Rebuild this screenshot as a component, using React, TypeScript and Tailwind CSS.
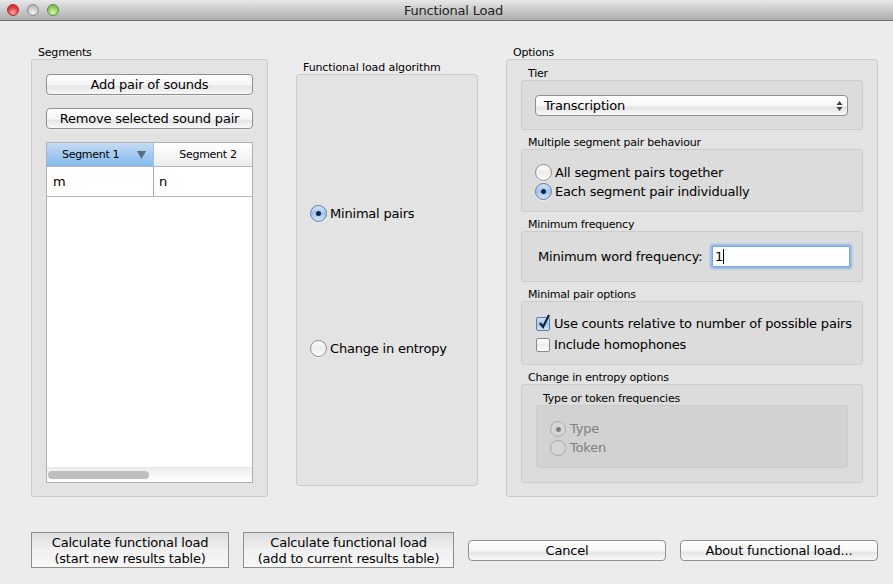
const FONT = "font-['DejaVu_Sans',sans-serif] tracking-[-0.2px]";

function Radio({ on, disabled }: { on?: boolean; disabled?: boolean }) {
  if (disabled) {
    return (
      <span className="flex h-[16px] w-[16px] shrink-0 items-center justify-center rounded-full border border-[#ababab] bg-[#d6d6d6]">
        {on && <span className="h-[5px] w-[5px] rounded-full bg-[#7d7d7d]" />}
      </span>
    );
  }
  return (
    <span
      className={
        on
          ? "flex h-[17px] w-[17px] shrink-0 items-center justify-center rounded-full border border-[#6a7a9a] bg-[linear-gradient(#d4e4f8,#9fc3ef_50%,#cfe4fc)] shadow-[0_1px_0_#f2f2f2]"
          : "flex h-[17px] w-[17px] shrink-0 items-center justify-center rounded-full border border-[#8a8a8a] bg-[linear-gradient(#ffffff,#ececec_50%,#ffffff)] shadow-[0_1px_0_#f2f2f2]"
      }
    >
      {on && <span className="h-[5px] w-[5px] rounded-full bg-[#14233c]" />}
    </span>
  );
}

function MacButton({ children, className }: { children: React.ReactNode; className: string }) {
  return (
    <div
      className={
        "flex h-[21px] items-center justify-center rounded-[4px] border border-[#8f8f8f] bg-[linear-gradient(#ffffff,#f6f6f6_50%,#e6e6e6_60%,#f8f8f8)] text-[13px] leading-none text-black shadow-[0_1px_0_#f0f0f0] " +
        className
      }
    >
      {children}
    </div>
  );
}

function SquareButton({ a, b, className }: { a: string; b: string; className: string }) {
  return (
    <div
      className={
        "flex h-[36px] flex-col items-center justify-center border border-[#8c8c8c] bg-[linear-gradient(#dedede,#f0f0f0_50%,#f8f8f8)] pt-[1px] text-[13px] leading-[16px] text-black " +
        className
      }
    >
      <span>{a}</span>
      <span>{b}</span>
    </div>
  );
}

function Group({
  label,
  boxClass,
  labelClass,
  children,
}: {
  label: string;
  boxClass: string;
  labelClass?: string;
  children?: React.ReactNode;
}) {
  return (
    <div>
      <div className={"h-[13px] text-[11px] leading-[13px] text-black " + (labelClass ?? "pl-[7px]")}>{label}</div>
      <div className={"rounded-[3px] border border-[#cbcbcb] " + boxClass}>{children}</div>
    </div>
  );
}

export default function App() {
  return (
    <div className={"flex h-[584px] w-[893px] flex-col overflow-hidden bg-[#ececec] " + FONT}>
      <div className="relative flex h-[21px] shrink-0 items-center justify-center border-b border-[#6f6f6f] bg-[linear-gradient(#e8e8e8,#adadad)] pl-[14px] text-[13px] leading-none text-[#222]">
        <div className="absolute left-[7px] top-[4px] flex gap-[8px]">
          <span className="h-[12px] w-[12px] rounded-full border border-[#a8343a] bg-[radial-gradient(circle_at_50%_75%,#ffb0a8,#e2353a_60%,#b92c30)]" />
          <span className="h-[12px] w-[12px] rounded-full border border-[#8f8f8f] bg-[radial-gradient(circle_at_50%_75%,#f4f4f4,#c4c4c4_60%,#a2a2a2)]" />
          <span className="h-[12px] w-[12px] rounded-full border border-[#5c9040] bg-[radial-gradient(circle_at_50%_75%,#d8f5b0,#8ccb5c_60%,#5f9f3c)]" />
        </div>
        <span>Functional Load</span>
      </div>

      <div className="flex gap-[28px] pl-[31px] pt-[25px]">
        <Group
          label="Segments"
          boxClass="h-[438px] w-[237px] bg-[#e3e3e3] pl-[14px] pt-[14px]"
        >
          <MacButton className="w-[207px]">Add pair of sounds</MacButton>
          <MacButton className="mt-[13px] w-[207px]">Remove selected sound pair</MacButton>
          <div className="mt-[13px] flex h-[341px] w-[207px] flex-col border border-[#b0b0b0] bg-white">
            <div className="flex h-[24px] border-b border-[#b5b5b5] text-[11px] leading-none tracking-[-0.3px] text-black">
              <div className="flex w-[107px] items-center justify-between border-r border-[#9cc3ea] bg-[linear-gradient(#c6dcf4,#a4caf0_50%,#82b9ee)] pl-[15px] pr-[7px]">
                <span>Segment 1</span>
                <svg width="9" height="8" viewBox="0 0 9 8">
                  <path d="M0 0h9L4.5 8z" fill="#5b6b7c" />
                </svg>
              </div>
              <div className="flex flex-1 items-center justify-center bg-[linear-gradient(#ffffff,#f6f6f6_50%,#ececec)] pl-[10px]">
                Segment 2
              </div>
            </div>
            <div className="flex h-[30px] border-b border-[#b5b5b5] text-[13px] text-black">
              <div className="flex w-[107px] items-center border-r border-[#a8a8a8] pl-[6px]">m</div>
              <div className="flex flex-1 items-center pl-[5px]">n</div>
            </div>
            <div className="flex-1" />
            <div className="flex h-[15px] items-center border-t border-[#e6e6e6] bg-[linear-gradient(#ededed,#ffffff)] pl-[1px]">
              <div className="h-[8px] w-[101px] rounded-full bg-[#bfbfbf]" />
            </div>
          </div>
        </Group>

        <div className="pt-[15px]">
          <Group
            label="Functional load algorithm"
            labelClass="pl-[7px] tracking-[-0.1px]"
            boxClass="flex h-[412px] w-[182px] flex-col bg-[#e3e3e3] pl-[13px] pt-[130px]"
          >
            <div className="flex h-[17px] items-center gap-[3px] text-[13px] text-black">
              <Radio on />
              <span>Minimal pairs</span>
            </div>
            <div className="mt-[118px] flex h-[17px] items-center gap-[3px] text-[13px] text-black">
              <Radio />
              <span>Change in entropy</span>
            </div>
          </Group>
        </div>

        <Group
          label="Options"
          boxClass="flex h-[438px] w-[372px] flex-col bg-[#e3e3e3] px-[14px] pt-[7px]"
        >
          <Group label="Tier" boxClass="flex h-[50px] items-start bg-[#dcdcdc] pl-[13px] pt-[14px]">
            <div className="flex h-[21px] w-[313px] items-center justify-between rounded-[4px] border border-[#8f8f8f] bg-[linear-gradient(#ffffff,#f6f6f6_50%,#e4e4e4_60%,#f8f8f8)] pl-[8px] pr-[4px] text-[13px] leading-none text-black">
              <span>Transcription</span>
              <svg width="7" height="12" viewBox="0 0 7 12">
                <path d="M3.5 1L6.5 5H.5zM3.5 11L.5 7h6z" fill="#444" />
              </svg>
            </div>
          </Group>
          <div className="mt-[6px]">
            <Group
              label="Multiple segment pair behaviour"
              boxClass="flex h-[63px] flex-col gap-[2px] bg-[#dcdcdc] pl-[13px] pt-[14px] text-[13px] text-black"
            >
              <div className="flex h-[17px] items-center gap-[3px]">
                <Radio />
                <span>All segment pairs together</span>
              </div>
              <div className="flex h-[17px] items-center gap-[3px]">
                <Radio on />
                <span>Each segment pair individually</span>
              </div>
            </Group>
          </div>
          <div className="mt-[6px]">
            <Group
              label="Minimum frequency"
              boxClass="flex h-[51px] items-start bg-[#dcdcdc] pl-[16px] pt-[14px] text-[13px] text-black"
            >
              <span className="flex h-[21px] w-[174px] items-center">Minimum word frequency:</span>
              <div className="flex h-[21px] w-[138px] items-center rounded-[1px] border border-[#7aa6dc] bg-white pl-[2px] leading-none shadow-[0_0_2px_2px_#8fb7e6]">
                <span>1</span>
                <span className="h-[15px] w-px bg-black" />
              </div>
            </Group>
          </div>
          <div className="mt-[6px]">
            <Group
              label="Minimal pair options"
              boxClass="flex h-[64px] flex-col gap-[5px] bg-[#dcdcdc] pl-[14px] pt-[14px] text-[13px] text-black"
            >
              <div className="flex h-[16px] items-center gap-[4px]">
                <span className="relative h-[14px] w-[14px] shrink-0 rounded-[2px] border border-[#6a7a9a] bg-[linear-gradient(#d4e4f8,#9fc3ef_50%,#cfe4fc)]">
                  <svg className="absolute -top-[5px] left-0" width="15" height="17" viewBox="0 0 15 17">
                    <path d="M3 10l3 4 6-12" fill="none" stroke="#14233c" strokeWidth="2.2" />
                  </svg>
                </span>
                <span>Use counts relative to number of possible pairs</span>
              </div>
              <div className="flex h-[16px] items-center gap-[4px]">
                <span className="h-[14px] w-[14px] shrink-0 rounded-[2px] border border-[#8a8a8a] bg-[linear-gradient(#ffffff,#ececec_50%,#ffffff)]" />
                <span>Include homophones</span>
              </div>
            </Group>
          </div>
          <div className="mt-[6px]">
            <Group
              label="Change in entropy options"
              boxClass="h-[99px] bg-[#dcdcdc] pl-[14px] pt-[7px]"
            >
              <Group
                label="Type or token frequencies"
                boxClass="flex h-[63px] w-[312px] flex-col gap-[3px] border-[#bdbdbd] bg-[#d2d2d2] pl-[13px] pt-[15px] text-[13px] font-medium text-[#808080]"
              >
                <div className="flex h-[16px] items-center gap-[4px]">
                  <Radio on disabled />
                  <span>Type</span>
                </div>
                <div className="flex h-[16px] items-center gap-[4px]">
                  <Radio disabled />
                  <span>Token</span>
                </div>
              </Group>
            </Group>
          </div>
        </Group>
      </div>

      <div className="flex items-center gap-[14px] pl-[31px] pt-[35px]">
        <SquareButton className="w-[198px]" a="Calculate functional load" b="(start new results table)" />
        <SquareButton className="w-[211px]" a="Calculate functional load" b="(add to current results table)" />
        <MacButton className="w-[198px]">Cancel</MacButton>
        <MacButton className="w-[198px]">About functional load...</MacButton>
      </div>
    </div>
  );
}
